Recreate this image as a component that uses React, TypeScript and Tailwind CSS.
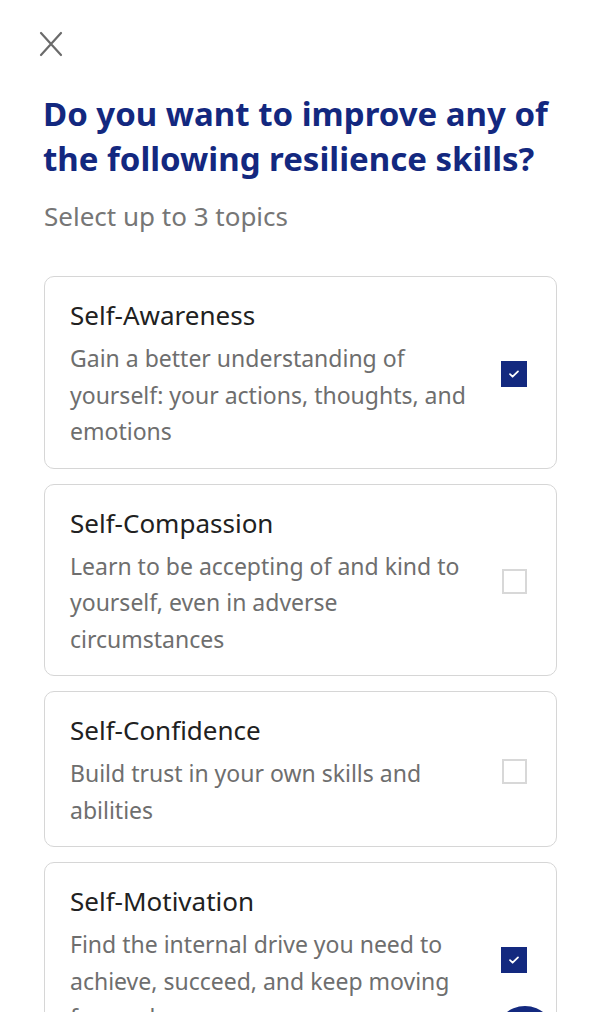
import React, { useState } from 'react';

const topics = [
  {
    title: 'Self-Awareness',
    desc: 'Gain a better understanding of yourself: your actions, thoughts, and emotions',
    checked: true,
  },
  {
    title: 'Self-Compassion',
    desc: 'Learn to be accepting of and kind to yourself, even in adverse circumstances',
    checked: false,
  },
  {
    title: 'Self-Confidence',
    desc: 'Build trust in your own skills and abilities',
    checked: false,
  },
  {
    title: 'Self-Motivation',
    desc: 'Find the internal drive you need to achieve, succeed, and keep moving forward',
    checked: true,
  },
];

const TopicCard = ({ title, desc, checked, onToggle }) => (
  <button
    onClick={onToggle}
    className="w-full flex items-center text-left border border-[#d6d6d6] rounded-[10px] bg-white pl-[25px] pr-[29px] pt-[22px] pb-[18px]"
  >
    <div className="w-[404px]">
      <div className="text-[26px] leading-[32px] text-[#212121]">{title}</div>
      <div className="mt-[9px] text-[23px] leading-[36.5px] text-[#6e6e6e]">{desc}</div>
    </div>
    <div className="ml-auto">
      {checked ? (
        <div className="w-[26px] h-[26px] bg-[#13297f] flex items-center justify-center">
          <svg width="12" height="12" viewBox="0 0 12 12" fill="none">
            <path d="M2 6.2l2.6 2.5L10 3.4" stroke="white" strokeWidth="1.8" strokeLinecap="round" strokeLinejoin="round" />
          </svg>
        </div>
      ) : (
        <div className="w-[25px] h-[25px] border-2 border-[#d8d8d8]" />
      )}
    </div>
  </button>
);

export default function App() {
  const [selected, setSelected] = useState(topics.map((t) => t.checked));

  const toggle = (i) => {
    const next = [...selected];
    next[i] = !next[i];
    setSelected(next);
  };

  return (
    <div className="relative h-[1012px] overflow-hidden bg-white font-['Noto_Sans',sans-serif]">
      <div className="pl-[44px] pr-[47px] pt-[31px]">
        <button className="block -ml-[6px] text-[#6b6b6b]">
          <svg width="26" height="26" viewBox="0 0 26 26" fill="none">
            <path d="M3 2l20 22M23 2L3 24" stroke="currentColor" strokeWidth="2.2" strokeLinecap="round" />
          </svg>
        </button>
        <h1 className="mt-[34px] -ml-[1px] -mr-[10px] text-[33px] leading-[45px] font-bold text-[#13287f]">
          Do you want to improve any of the following resilience skills?
        </h1>
        <p className="mt-[18px] text-[26px] leading-[34px] text-[#767676]">Select up to 3 topics</p>
        <div className="mt-[43px] flex flex-col gap-[15px]">
          {topics.map((t, i) => (
            <TopicCard key={t.title} title={t.title} desc={t.desc} checked={selected[i]} onToggle={() => toggle(i)} />
          ))}
        </div>
      </div>
      {/* floating button peeking at the bottom */}
      <div className="absolute left-[495px] top-[1006px] w-[60px] h-[60px] rounded-full bg-[#13297f] shadow-md" />
    </div>
  );
}
